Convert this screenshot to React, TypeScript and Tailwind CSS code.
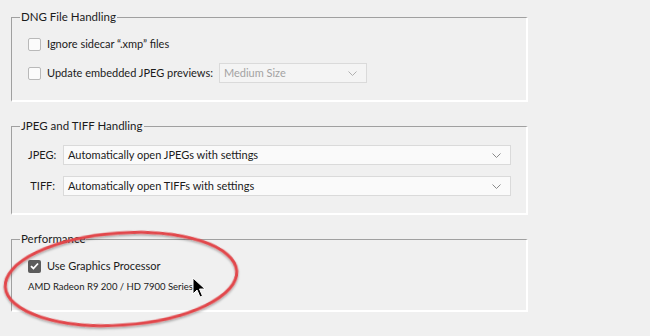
import { ReactNode } from 'react'

const font = { fontFamily: 'Lato, "Noto Sans", "Liberation Sans", sans-serif' }

function Check({ checked = false }: { checked?: boolean }) {
    if (checked) {
        return (
            <span className="flex h-[13px] w-[13px] shrink-0 items-center justify-center rounded-[2px] bg-[#5c5c5c]">
                <svg width="9" height="8" viewBox="0 0 9 8">
                    <path d="M1 4.2 L3.4 6.5 L8 1.5" fill="none" stroke="#fff" strokeWidth="1.8" />
                </svg>
            </span>
        )
    }
    return <span className="h-[13px] w-[13px] shrink-0 rounded-[2px] border border-[#b9b9b9] bg-[#fbfbfb]" />
}

function Chevron({ color = '#8a8a8a' }: { color?: string }) {
    return (
        <svg width="9" height="5" viewBox="0 0 9 5">
            <path d="M0.5 0.5 L4.5 4.5 L8.5 0.5" fill="none" stroke={color} strokeWidth="1" />
        </svg>
    )
}

function Group({ title, children, className }: { title: string; children: ReactNode; className?: string }) {
    return (
        <fieldset
            className={`ml-[11px] w-[517px] border-t border-l border-t-[#a0a0a0] border-l-[#a0a0a0] border-r-2 border-b-2 border-r-white border-b-white pl-4 ${className ?? ''}`}
        >
            <legend className="-ml-[8px] px-[1px] text-[11.5px] leading-[14px] text-[#1b1b1b]">{title}</legend>
            {children}
        </fieldset>
    )
}

export default function App() {
    return (
        <div className="relative h-[336px] w-[650px] overflow-hidden bg-[#f0f0f0] pt-[10px]" style={font}>
            <Group title="DNG File Handling" className="pt-[10px] pb-[17px]">
                <div className="flex h-5 items-center gap-[6px] text-[11px] text-[#1b1b1b]">
                    <Check />
                    <span>Ignore sidecar “.xmp” files</span>
                </div>
                <div className="mt-[9px] flex h-5 items-center gap-[6px] text-[11px] text-[#1b1b1b]">
                    <Check />
                    <span>Update embedded JPEG previews:</span>
                    <div className="flex h-5 w-[148px] items-center justify-between border border-[#dadada] bg-[#f4f4f4] pr-[9px] pl-[4px] text-[#a3a3a3]">
                        <span>Medium Size</span>
                        <Chevron color="#b0b0b0" />
                    </div>
                </div>
            </Group>

            <Group title="JPEG and TIFF Handling" className="mt-[17px] pt-[12px] pb-[17px]">
                {[
                    ['JPEG:', 'Automatically open JPEGs with settings'],
                    ['TIFF:', 'Automatically open TIFFs with settings'],
                ].map(([label, value], i) => (
                    <div
                        key={label}
                        className={`flex h-5 items-center text-[11px] text-[#1b1b1b] ${i ? 'mt-[11px]' : ''}`}
                    >
                        <span className="w-[27px] text-right">{label}</span>
                        <div className="ml-[8px] flex h-5 w-[448px] items-center justify-between border border-[#dadada] bg-[#fafafa] pr-[9px] pl-[4px]">
                            <span>{value}</span>
                            <Chevron />
                        </div>
                    </div>
                ))}
            </Group>

            <Group title="Performance" className="mt-[17px] pt-[10px] pb-[16px]">
                <div className="flex h-5 items-center gap-[6px] text-[11px] text-[#1b1b1b]">
                    <Check checked />
                    <span>Use Graphics Processor</span>
                </div>
                <div className="mt-[4px] text-[9.5px] leading-[14px] text-[#1b1b1b]">
                    AMD Radeon R9 200 / HD 7900 Series
                </div>
            </Group>

            <svg className="pointer-events-none absolute top-0 left-0" width="650" height="336">
                <defs>
                    <filter id="sh" x="-10%" y="-20%" width="120%" height="140%">
                        <feDropShadow dx="0" dy="1.5" stdDeviation="1.2" floodColor="#000" floodOpacity="0.35" />
                    </filter>
                </defs>
                <ellipse
                    cx="121"
                    cy="279"
                    rx="116"
                    ry="46"
                    transform="rotate(-4 121 279)"
                    fill="none"
                    stroke="#e2474b"
                    strokeWidth="3"
                    filter="url(#sh)"
                />
                <path
                    d="M193 278 L193 294 L197 290 L200 297 L202.5 296 L199.5 289 L205 289 Z"
                    fill="#000"
                    stroke="#fff"
                    strokeWidth="1"
                />
            </svg>
        </div>
    )
}
